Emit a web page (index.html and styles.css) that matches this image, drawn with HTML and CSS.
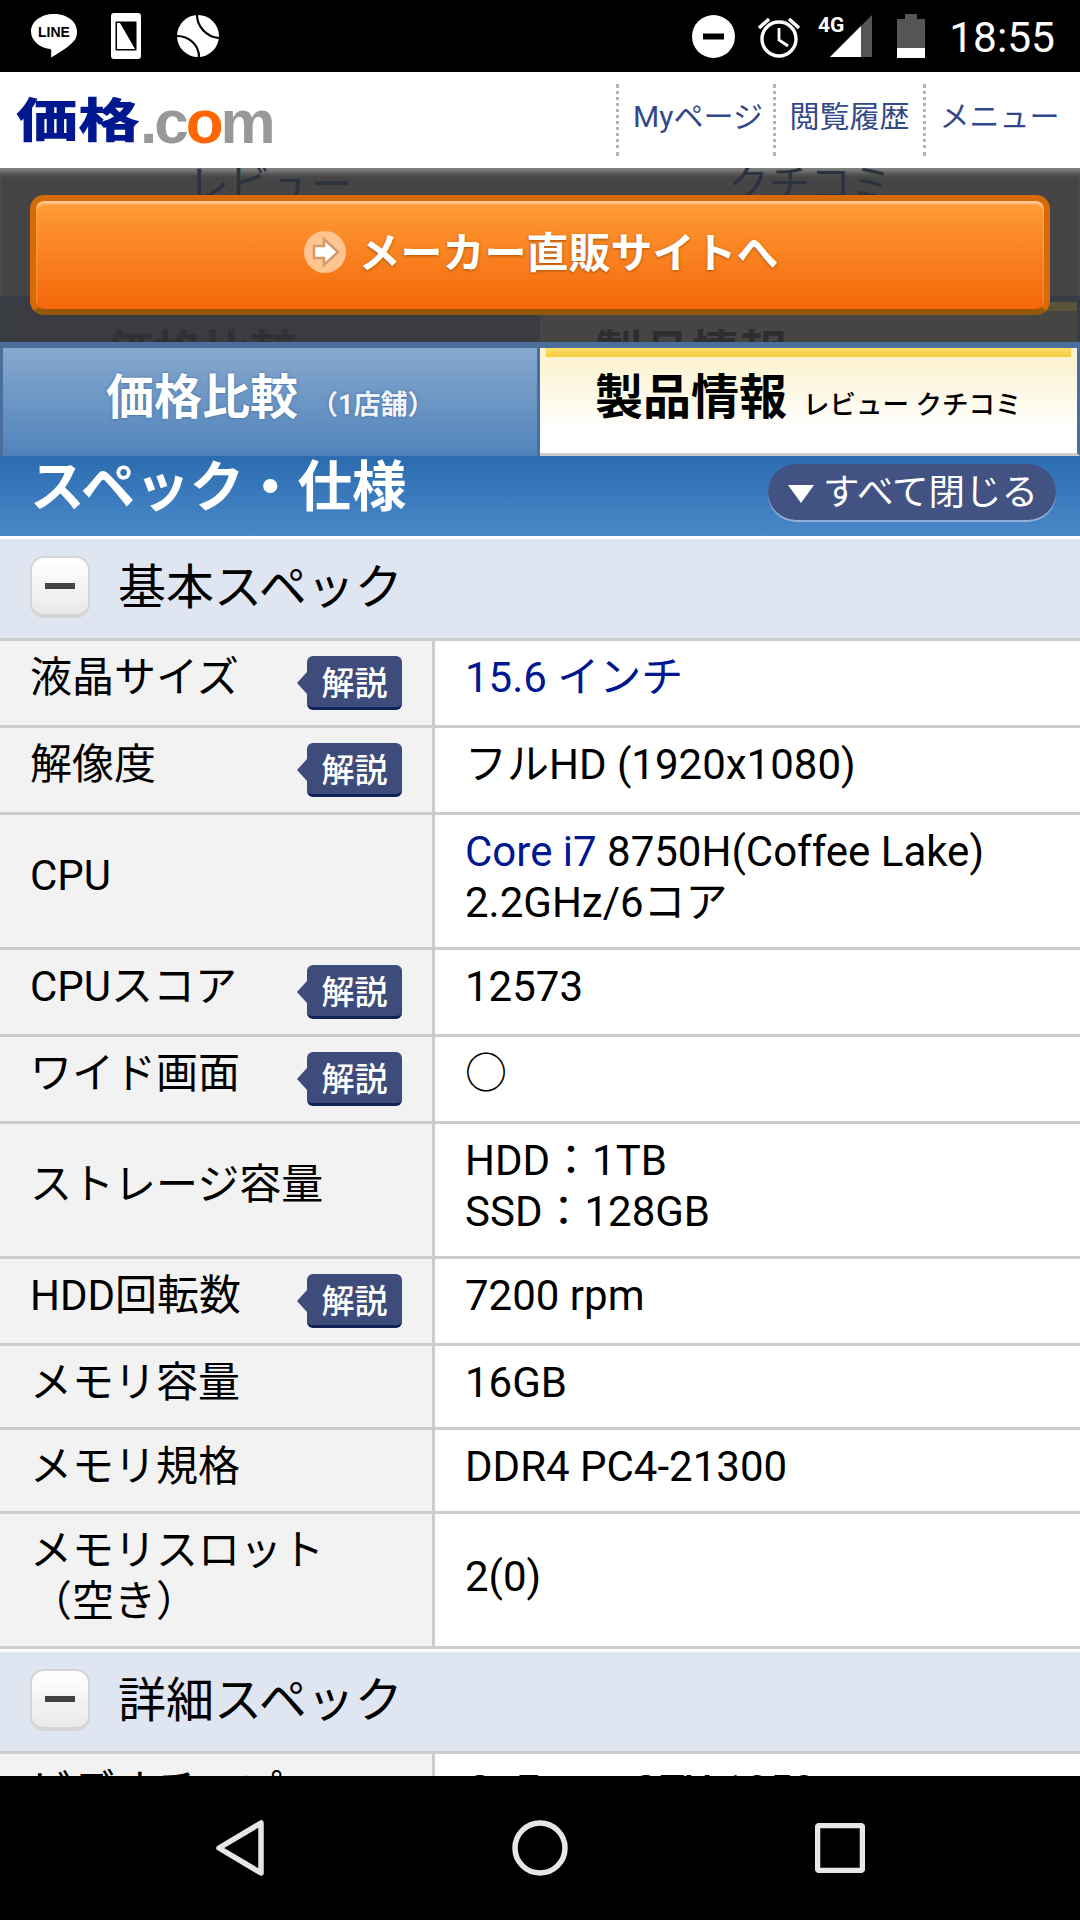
FILE: index.html
```html
<!DOCTYPE html>
<html lang="ja">
<head>
  <meta charset="UTF-8">
  <meta name="viewport" content="width=device-width, initial-scale=1.0">
  <title>価格.com スペック・仕様</title>
  <link rel="stylesheet" href="styles.css">
</head>
<body>
  <div class="status-bar">
    <div class="status-left">
      <svg class="icon-line" width="48" height="46" viewBox="0 0 48 46">
        <path d="M24 1C11 1 1 8.500 1 18.500c0 9 8 16 19 17.500 1.500.3 1.500 1.500 1 8.500 5-3 17-9.500 23-16.500 2.500-3 3-6 3-9.500C47 8.500 37 1 24 1z" fill="#fff"/>
        <text x="24" y="24" class="line-text" text-anchor="middle">LINE</text>
      </svg>
      <svg class="icon-phone" width="30" height="46" viewBox="0 0 30 46">
        <rect width="30" height="46" rx="3" fill="#fff"/>
        <rect x="4.500" y="8.500" width="21" height="29" fill="#000"/>
        <path d="M6 10h3l15 26H6z" fill="#fff"/>
      </svg>
      <svg class="icon-ball" width="42" height="42" viewBox="0 0 42 42">
        <circle cx="21" cy="21" r="21" fill="#fff"/>
        <path d="M20 0c0 11 9 22 22 23M0 21c12 0 22 9 22 21" fill="none" stroke="#000" stroke-width="2.200"/>
      </svg>
    </div>
    <div class="status-right">
      <svg class="icon-dnd" width="43" height="43" viewBox="0 0 43 43">
        <circle cx="21.500" cy="21.500" r="21.500" fill="#fff"/>
        <rect x="11" y="18.500" width="21" height="6" fill="#000"/>
      </svg>
      <svg class="icon-alarm" width="42" height="43" viewBox="0 0 42 43">
        <circle cx="21" cy="24" r="17" fill="none" stroke="#fff" stroke-width="3.400"/>
        <path d="M21 13v12l9 6" fill="none" stroke="#fff" stroke-width="2.800"/>
        <path d="M1 13 11 4M41 13 31 4" fill="none" stroke="#fff" stroke-width="3.600"/>
      </svg>
      <svg class="icon-signal" width="54" height="44" viewBox="0 0 54 44">
        <path d="M12 43 54 1v42z" fill="#555"/>
        <path d="M12 43 43 12v31z" fill="#fff"/>
        <text x="0" y="18" class="net-text">4G</text>
      </svg>
      <svg class="icon-battery" width="28" height="44" viewBox="0 0 28 44">
        <path d="M8 0h12v5h8v39H0V5h8z" fill="#555"/>
        <rect y="34" width="28" height="10" fill="#fff"/>
      </svg>
      <span class="clock">18:55</span>
    </div>
  </div>

  <div class="screen">
    <div class="site-header">
      <div class="logo"><span class="logo-ja">価格</span><span class="logo-en">.c<span class="logo-o">o</span>m</span></div>
      <div class="site-nav">
        <div class="nav-item"><span>Myページ</span></div>
        <div class="nav-item"><span>閲覧履歴</span></div>
        <div class="nav-item"><span>メニュー</span></div>
      </div>
    </div>

    <div class="overlay">
      <div class="ghost-links">
        <span>レビュー</span>
        <span>クチコミ</span>
      </div>
      <div class="ghost-tabs">
        <div class="ghost-tab ghost-left">価格比較</div>
        <div class="ghost-tab ghost-right">製品情報</div>
      </div>
      <div class="buy-btn">
        <svg class="buy-icon" width="42" height="42" viewBox="0 0 42 42">
          <circle cx="21" cy="21" r="21" fill="#ffc48f"/>
          <path d="M10 15h10V8l14 13-14 13v-7H10z" fill="#fff" stroke="#d39a6a" stroke-width="2.500"/>
        </svg>
        <span class="buy-text">メーカー直販サイトへ</span>
      </div>
    </div>

    <div class="tabs">
      <div class="tab tab-price"><span class="tab-main">価格比較</span><span class="tab-sub">（1店舗）</span></div>
      <div class="tab tab-info"><span class="tab-main">製品情報</span><span class="tab-sub">レビュー クチコミ</span></div>
    </div>

    <div class="spec-title">
      <h1>スペック・仕様</h1>
      <div class="close-all"><span class="tri"></span>すべて閉じる</div>
    </div>

    <div class="section-head">
      <span class="toggle"></span>
      <h2>基本スペック</h2>
    </div>
    <div class="row">
      <div class="label"><span>液晶サイズ</span><span class="help">解説</span></div>
      <div class="value"><a>15.6 インチ</a></div>
    </div>
    <div class="row">
      <div class="label"><span>解像度</span><span class="help">解説</span></div>
      <div class="value">フルHD (1920x1080)</div>
    </div>
    <div class="row">
      <div class="label mid"><span>CPU</span></div>
      <div class="value"><a>Core i7</a> 8750H(Coffee Lake)<br>2.2GHz/6コア</div>
    </div>
    <div class="row">
      <div class="label"><span>CPUスコア</span><span class="help">解説</span></div>
      <div class="value">12573</div>
    </div>
    <div class="row">
      <div class="label"><span>ワイド画面</span><span class="help">解説</span></div>
      <div class="value">○</div>
    </div>
    <div class="row">
      <div class="label mid"><span>ストレージ容量</span></div>
      <div class="value">HDD：1TB<br>SSD：128GB</div>
    </div>
    <div class="row">
      <div class="label"><span>HDD回転数</span><span class="help">解説</span></div>
      <div class="value">7200 rpm</div>
    </div>
    <div class="row">
      <div class="label"><span>メモリ容量</span></div>
      <div class="value">16GB</div>
    </div>
    <div class="row">
      <div class="label"><span>メモリ規格</span></div>
      <div class="value">DDR4 PC4-21300</div>
    </div>
    <div class="row">
      <div class="label"><span>メモリスロット<br>（空き）</span></div>
      <div class="value mid">2(0)</div>
    </div>

    <div class="section-head section-gap">
      <span class="toggle"></span>
      <h2>詳細スペック</h2>
    </div>
    <div class="row">
      <div class="label"><span>ビデオチップ</span></div>
      <div class="value">GeForce GTX 1050</div>
    </div>
  </div>

  <div class="nav-bar">
    <svg width="48" height="56" viewBox="0 0 48 56">
      <path d="M45 3v50L3 28z" fill="none" stroke="#e6e6e6" stroke-width="5.500" stroke-linejoin="round"/>
    </svg>
    <svg width="56" height="56" viewBox="0 0 56 56">
      <circle cx="28" cy="28" r="25" fill="none" stroke="#e6e6e6" stroke-width="5.500"/>
    </svg>
    <svg width="50" height="50" viewBox="0 0 50 50">
      <rect x="2.500" y="2.500" width="45" height="45" rx="2" fill="none" stroke="#e6e6e6" stroke-width="5.500"/>
    </svg>
  </div>
</body>
</html>
```

FILE: styles.css
```css
* {
  box-sizing: border-box;
}
body {
  margin: 0;
  width: 1080px;
  height: 1920px;
  overflow: hidden;
  display: flex;
  flex-direction: column;
  background: #000;
  font-family: Roboto, "Noto Sans CJK JP", sans-serif;
  font-size: 42px;
  color: #000;
}
h1, h2 {
  margin: 0;
}

/* status bar */
.status-bar {
  height: 72px;
  flex: none;
  display: flex;
  justify-content: space-between;
  align-items: center;
  background: #000;
  color: #fff;
}
.status-left {
  display: flex;
  align-items: center;
  gap: 33px;
  padding-left: 30px;
}
.icon-ball {
  margin-left: 3px;
}
.status-right {
  display: flex;
  align-items: center;
  padding-right: 25px;
}
.line-text {
  font-family: "Liberation Sans", sans-serif;
  font-size: 14px;
  font-weight: 700;
  fill: #000;
}
.net-text {
  font-family: Roboto, sans-serif;
  font-size: 21px;
  font-weight: 700;
  fill: #fff;
}
.icon-alarm {
  margin-left: 23px;
}
.icon-signal {
  margin-left: 18px;
}
.icon-battery {
  margin-left: 25px;
}
.clock {
  margin-left: 24px;
  font-size: 42.500px;
  line-height: 72px;
  padding-top: 3px;
}

/* page */
.screen {
  flex: 1;
  min-height: 0;
  overflow: hidden;
  background: #fff;
}
.site-header {
  height: 96px;
  display: flex;
  align-items: center;
  justify-content: space-between;
  background: #fff;
}
.logo {
  display: flex;
  align-items: baseline;
  padding-left: 16px;
  height: 96px;
  line-height: 88px;
}
.logo-ja {
  display: inline-block;
  font-family: "Noto Sans CJK JP", sans-serif;
  font-size: 62px;
  font-weight: 900;
  color: #00188f;
  transform: scaleY(.76);
}
.logo-en {
  font-family: "Liberation Sans", sans-serif;
  font-size: 62px;
  font-weight: 700;
  letter-spacing: -3px;
  color: #989898;
}
.logo-o {
  color: #ff6600;
}
.site-nav {
  display: flex;
  padding-right: 7px;
}
.nav-item {
  width: 150px;
  height: 72px;
  display: flex;
  align-items: center;
  justify-content: center;
  border-left: 3px dotted #b5b5b5;
  font-size: 30px;
  color: #33488a;
}
.nav-item span {
  margin-top: -12px;
}
.nav-item:first-child {
  width: 157px;
  padding-left: 4px;
}

/* dimmed part under the buy button */
.overlay {
  position: relative;
  height: 174px;
  overflow: hidden;
  background: #454545;
  box-shadow: inset 0 8px 6px -4px #8a8a8a;
}
.ghost-links {
  height: 128px;
  display: flex;
  font-size: 41px;
  line-height: 40px;
  color: #2d3240;
}
.ghost-links span {
  width: 50%;
  text-align: center;
  margin-top: -3px;
}
.ghost-tabs {
  display: flex;
  height: 46px;
}
.ghost-tab {
  width: 50%;
  border: 3px solid #383c47;
  border-top-width: 6px;
  border-bottom: 0;
  font-size: 48px;
  font-weight: 700;
  line-height: 104px;
}
.ghost-left {
  background: #3a3c41;
  color: #2f3135;
  padding-left: 103px;
}
.ghost-right {
  background: #474543;
  color: #2e2e2f;
  padding-left: 55px;
  border-left: 0;
  box-shadow: inset 0 9px 0 #5c5338;
}
.buy-btn {
  position: absolute;
  top: 27px;
  left: 30px;
  right: 30px;
  height: 120px;
  display: flex;
  align-items: center;
  justify-content: center;
  gap: 12px;
  padding-left: 3px;
  border: 6px solid #d66a05;
  border-bottom-color: #955808;
  border-radius: 14px;
  background: linear-gradient(#ff9c35, #f4680b);
  box-shadow: inset 0 3px 2px #ffc895;
  font-size: 42px;
  font-weight: 700;
  color: #fff;
  text-shadow: 0 1px 3px #a8500c;
}
.buy-icon {
  margin-bottom: 6px;
}
.buy-text {
  margin-top: -12px;
}

/* tabs */
.tabs {
  height: 114px;
  display: flex;
  background: #4a6f9c;
}
.tab {
  display: flex;
  align-items: baseline;
  height: 114px;
  border: 3px solid #4a6f9c;
  border-top-width: 6px;
  border-bottom: 0;
  line-height: 100px;
}
.tab-main {
  font-size: 48px;
  font-weight: 700;
}
.tab-price {
  width: 540px;
  padding-left: 103px;
  background: linear-gradient(#86a8ce, #5183bb);
  color: #fff;
  text-shadow: 0 0 3px #3f6a9f;
}
.tab-price .tab-sub {
  font-size: 27px;
  font-weight: 700;
  margin-left: 13px;
  color: #f2f5fa;
}
.tab-info {
  flex: 1;
  padding-left: 55px;
  border-left: 0;
  border-bottom: 3px solid #ccc;
  background:
    linear-gradient(#fbdf6d, #f7cb3c) 6px 0 / calc(100% - 12px) 9px no-repeat,
    linear-gradient(#fbf2cf 9px, #fff 84px);
}
.tab-info .tab-sub {
  font-size: 26.500px;
  font-weight: 500;
  margin-left: 16px;
}

/* title bar */
.spec-title {
  height: 80px;
  display: flex;
  justify-content: space-between;
  align-items: center;
  padding: 0 24px 0 30px;
  background: linear-gradient(#2b6cb0, #4a88c8);
  color: #fff;
}
.spec-title h1 {
  font-size: 54.500px;
  font-weight: 700;
  line-height: 54px;
  margin-top: -18px;
}
.close-all {
  width: 288px;
  height: 56px;
  display: flex;
  align-items: center;
  gap: 9px;
  padding: 0 0 6px 20px;
  border-radius: 28px;
  background: #425282;
  box-shadow: 0 2px 0 #8eb0d8;
  font-size: 36.500px;
  margin-top: -8px;
}
.tri {
  width: 0;
  height: 0;
  border-left: 13px solid transparent;
  border-right: 13px solid transparent;
  border-top: 18px solid #fff;
  margin-top: 9px;
}

/* spec table */
.section-head {
  height: 102px;
  margin-top: 3px;
  display: flex;
  align-items: center;
  gap: 28px;
  padding: 0 0 3px 30px;
  background: #dfe5f1;
  border-bottom: 3px solid #ccc;
}
.section-gap {
  margin-top: 3px;
}
.section-head h2 {
  font-size: 48px;
  font-weight: 400;
  margin-top: -8px;
}
.toggle {
  width: 60px;
  height: 62px;
  display: flex;
  align-items: center;
  justify-content: center;
  border: 2px solid #d5d5d5;
  border-bottom-width: 4px;
  border-radius: 14px;
  background: linear-gradient(#fff, #e9e9e9);
}
.toggle::before {
  content: "";
  width: 30px;
  height: 6px;
  background: #444;
}
.row {
  display: grid;
  grid-template-columns: 435px 1fr;
  border-bottom: 3px solid #ccc;
  line-height: 51px;
}
.label {
  display: flex;
  justify-content: space-between;
  align-items: flex-start;
  padding: 11px 30px 19px 30px;
  background: #f2f2f2;
  border-right: 3px solid #ccc;
}
.label.mid {
  align-items: center;
  padding-top: 9px;
  padding-bottom: 21px;
}
.value {
  padding: 11px 20px 19px 30px;
}
.value.mid {
  display: flex;
  align-items: center;
}
.value a {
  color: #00188f;
}
.help {
  position: relative;
  width: 95px;
  height: 54px;
  margin: 4px 0 -4px;
  border-radius: 6px;
  background: #3d4c7b;
  border-bottom: 3px solid #0f2358;
  color: #fff;
  font-size: 33px;
  font-weight: 500;
  line-height: 56px;
  text-align: center;
}
.help::before {
  content: "";
  position: absolute;
  left: -10px;
  top: 16px;
  border-top: 11px solid transparent;
  border-bottom: 11px solid transparent;
  border-right: 10px solid #3d4c7b;
}

/* nav bar */
.nav-bar {
  height: 144px;
  flex: none;
  display: grid;
  grid-template-columns: repeat(3, 300px);
  justify-content: center;
  justify-items: center;
  align-items: center;
  background: #000;
}
```
